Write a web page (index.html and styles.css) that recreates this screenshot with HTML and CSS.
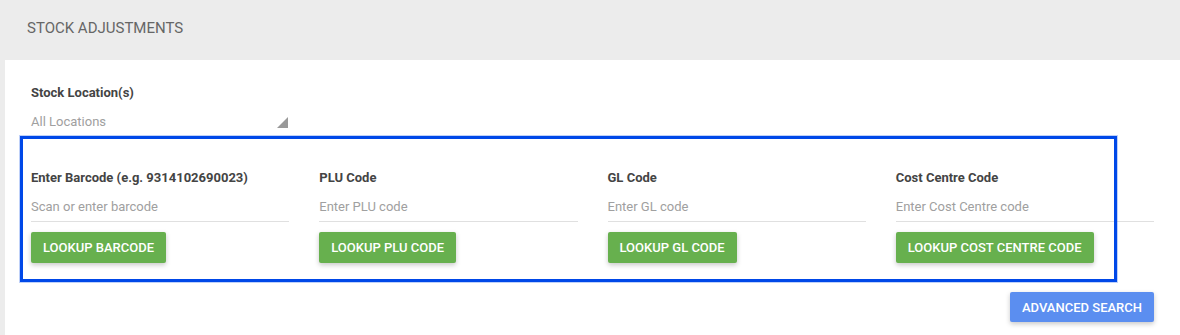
FILE: index.html
```html
<!DOCTYPE html>
<html lang="en">
<head>
  <meta charset="UTF-8" />
  <meta name="viewport" content="width=device-width, initial-scale=1.0"/>
  <title>Stock Adjustments</title>
  <link rel="stylesheet" href="styles.css">
</head>
<body>
  <div class="header">STOCK ADJUSTMENTS</div>

  <div class="card">
    <label class="field-label" for="location">Stock Location(s)</label>
    <div class="select" id="location">
      <span>All Locations</span>
      <span class="select-arrow"></span>
    </div>

    <div class="lookup-grid">
      <div class="lookup">
        <label class="field-label" for="barcode">Enter Barcode (e.g. 9314102690023)</label>
        <input type="text" id="barcode" placeholder="Scan or enter barcode" />
        <button class="btn btn-green">Lookup Barcode</button>
      </div>
      <div class="lookup">
        <label class="field-label" for="plu">PLU Code</label>
        <input type="text" id="plu" placeholder="Enter PLU code" />
        <button class="btn btn-green">Lookup PLU Code</button>
      </div>
      <div class="lookup">
        <label class="field-label" for="gl">GL Code</label>
        <input type="text" id="gl" placeholder="Enter GL code" />
        <button class="btn btn-green">Lookup GL Code</button>
      </div>
      <div class="lookup">
        <label class="field-label" for="costCentre">Cost Centre Code</label>
        <input type="text" id="costCentre" placeholder="Enter Cost Centre code" />
        <button class="btn btn-green">Lookup Cost Centre Code</button>
      </div>
    </div>

    <div class="actions">
      <button class="btn btn-blue">Advanced Search</button>
    </div>
  </div>

  <div class="highlight"></div>
</body>
</html>
```

FILE: styles.css
```css
body {
  margin: 0;
  background-color: #ececec;
  font-family: Roboto, "Liberation Sans", sans-serif;
  color: #444;
  position: relative;
  height: 335px;
  overflow: hidden;
}

.header {
  height: 41px;
  padding: 19px 27px 0;
  font-size: 15px;
  line-height: 18px;
  color: #666;
}

.card {
  margin-left: 5px;
  background-color: #ffffff;
  padding: 25px 26px 0 26px;
  height: 250px;
}

.field-label {
  display: block;
  font-size: 13px;
  line-height: 16px;
  font-weight: bold;
  color: #444;
}

.select {
  width: 258px;
  margin-top: 13px;
  display: flex;
  justify-content: space-between;
  align-items: flex-end;
  font-size: 13px;
  line-height: 16px;
  color: #a0a0a0;
}

.select-arrow {
  width: 0;
  height: 0;
  margin-right: 1px;
  margin-bottom: 2px;
  border-left: 11px solid transparent;
  border-bottom: 11px solid #999;
}

.lookup-grid {
  margin-top: 40px;
  display: grid;
  grid-template-columns: repeat(4, 1fr);
  column-gap: 30px;
}

.lookup {
  display: flex;
  flex-direction: column;
  align-items: flex-start;
}

.lookup input {
  width: 100%;
  box-sizing: border-box;
  margin-top: 8px;
  padding: 5px 0 6px;
  border: none;
  border-bottom: 1px solid #e0e0e0;
  font-family: inherit;
  font-size: 13px;
  line-height: 16px;
  outline: none;
}

.lookup input::placeholder {
  color: #a0a0a0;
}

.btn {
  border: none;
  border-radius: 2px;
  padding: 0 12px;
  height: 31px;
  font-family: inherit;
  font-size: 13px;
  font-weight: 500;
  text-transform: uppercase;
  color: #fff;
  cursor: pointer;
  box-shadow: 0 2px 5px rgba(0, 0, 0, 0.22);
}

.btn-green {
  margin-top: 10px;
  background-color: #67b04e;
}

.btn-blue {
  height: 30px;
  background-color: #5b8ef0;
}

.actions {
  margin-top: 29px;
  display: flex;
  justify-content: flex-end;
}

.highlight {
  position: absolute;
  left: 20px;
  top: 136px;
  width: 1097px;
  height: 146px;
  box-sizing: border-box;
  border: 3px solid #0048e8;
  box-shadow: 0 0 0 1px rgba(0, 72, 232, 0.25);
  pointer-events: none;
}
```
